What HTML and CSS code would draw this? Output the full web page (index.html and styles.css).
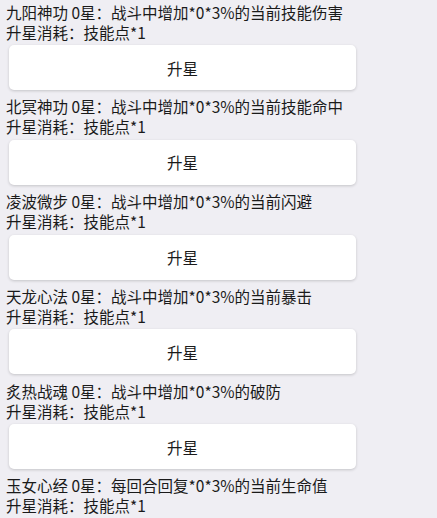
FILE: index.html
```html
<!DOCTYPE html>
<html lang="zh">
<head>
    <meta charset="UTF-8">
    <meta name="viewport" content="width=device-width, initial-scale=1.0">
    <title>技能升星</title>
    <link rel="stylesheet" href="styles.css">
</head>
<body>
    <div class="skill-list">
        <div class="skill-item">
            <div class="skill-desc">九阳神功 0星：战斗中增加*0*3%的当前技能伤害</div>
            <div class="skill-cost">升星消耗：技能点*1</div>
            <button class="upgrade-btn">升星</button>
        </div>
        <div class="skill-item">
            <div class="skill-desc">北冥神功 0星：战斗中增加*0*3%的当前技能命中</div>
            <div class="skill-cost">升星消耗：技能点*1</div>
            <button class="upgrade-btn">升星</button>
        </div>
        <div class="skill-item">
            <div class="skill-desc">凌波微步 0星：战斗中增加*0*3%的当前闪避</div>
            <div class="skill-cost">升星消耗：技能点*1</div>
            <button class="upgrade-btn">升星</button>
        </div>
        <div class="skill-item">
            <div class="skill-desc">天龙心法 0星：战斗中增加*0*3%的当前暴击</div>
            <div class="skill-cost">升星消耗：技能点*1</div>
            <button class="upgrade-btn">升星</button>
        </div>
        <div class="skill-item">
            <div class="skill-desc">炙热战魂 0星：战斗中增加*0*3%的破防</div>
            <div class="skill-cost">升星消耗：技能点*1</div>
            <button class="upgrade-btn">升星</button>
        </div>
        <div class="skill-item">
            <div class="skill-desc">玉女心经 0星：每回合回复*0*3%的当前生命值</div>
            <div class="skill-cost">升星消耗：技能点*1</div>
        </div>
    </div>
</body>
</html>
```

FILE: styles.css
```css
body {
    margin: 0;
    padding: 1.5px 0 0 6px;
    background-color: #efeef3;
    font-family: "Noto Sans CJK SC", "Noto Sans", sans-serif;
    font-size: 15.5px;
    line-height: 20px;
    color: #1a1a1a;
}
.skill-item {
    display: flex;
    flex-direction: column;
    align-items: flex-start;
}
.upgrade-btn {
    width: 347px;
    height: 45px;
    margin: 3.5px 0 6.25px 3px;
    background-color: #fff;
    border: none;
    border-radius: 5px;
    box-shadow: 0 1px 3px rgba(0, 0, 0, 0.18);
    font-family: inherit;
    font-size: 15.5px;
    color: #1a1a1a;
    cursor: pointer;
}
```
